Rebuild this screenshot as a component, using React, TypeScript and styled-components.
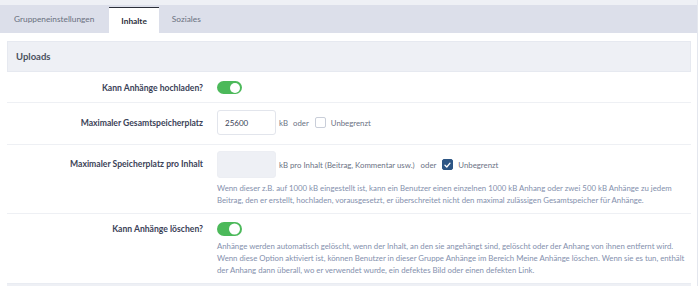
import React from "react";
import styled, { createGlobalStyle } from "styled-components";

const Global = createGlobalStyle`
  html, body { margin: 0; padding: 0; background: #ffffff; }
  body { font-family: Lato, "Open Sans", sans-serif; }
  * { box-sizing: border-box; }
`;

const Page = styled.div`
  width: 698px;
  height: 286px;
  overflow: hidden;
  border-right: 1px solid #e4e7ee;
  background: #fff;
`;

const TopStrip = styled.div`
  height: 5px;
  background: #eef0f5;
`;

const TabBar = styled.div`
  height: 28px;
  background: #dcdfea;
  display: flex;
  align-items: flex-end;
`;

const Tab = styled.div<{ $active?: boolean; $first?: boolean }>`
  height: ${(p) => (p.$active ? "26px" : "28px")};
  padding: ${(p) => (p.$first ? "0 15px 0 14px" : p.$active ? "0 12px" : "0 13px")};
  display: flex;
  align-items: center;
  font-size: 8.3px;
  font-weight: ${(p) => (p.$active ? 700 : 400)};
  color: ${(p) => (p.$active ? "#2b2f3a" : "#6a7080")};
  background: ${(p) => (p.$active ? "#ffffff" : "transparent")};
  border-top: ${(p) => (p.$active ? "1.5px solid #2b2f3a" : "none")};
`;

const Content = styled.div`
  padding: 8px 6px 0 7px;
`;

const SectionHeader = styled.div`
  height: 31px;
  background: #eef0f5;
  border: 1px solid #e6e9f0;
  display: flex;
  align-items: center;
  padding-left: 8px;
  font-size: 9.5px;
  font-weight: 700;
  color: #4a505e;
`;

const Row = styled.div<{ $pt: number; $pb: number; $last?: boolean }>`
  display: grid;
  grid-template-columns: 196px 1fr;
  column-gap: 14px;
  padding: ${(p) => p.$pt}px 0 ${(p) => p.$pb}px;
  border-bottom: 1px solid ${(p) => (p.$last ? "#e9ecf2" : "#eef0f4")};
`;

const Label = styled.div<{ $h: number }>`
  height: ${(p) => p.$h}px;
  display: flex;
  align-items: center;
  justify-content: flex-end;
  font-size: 8.6px;
  font-weight: 700;
  color: #3b4257;
  white-space: nowrap;
`;

const Control = styled.div`
  display: flex;
  flex-direction: column;
`;

const Line = styled.div`
  display: flex;
  align-items: center;
  white-space: nowrap;
`;

const Toggle = styled.div<{ $h: number }>`
  width: 25px;
  height: ${(p) => p.$h}px;
  border-radius: 8px;
  background: #4cb95a;
  position: relative;
  &::after {
    content: "";
    position: absolute;
    right: 2px;
    top: 50%;
    transform: translateY(-50%);
    width: ${(p) => p.$h - 3}px;
    height: ${(p) => p.$h - 3}px;
    border-radius: 50%;
    background: #fff;
  }
`;

const Input = styled.div<{ $disabled?: boolean; $h: number }>`
  width: 59px;
  height: ${(p) => p.$h}px;
  border: 1px solid ${(p) => (p.$disabled ? "#eceef3" : "#e2e5ec")};
  border-radius: 3px;
  background: ${(p) => (p.$disabled ? "#eef0f5" : "#ffffff")};
  display: flex;
  align-items: center;
  padding-left: 7px;
  font-size: 8px;
  color: #3b4257;
`;

const Unit = styled.span<{ $ml: number }>`
  margin-left: ${(p) => p.$ml}px;
  font-size: 7.8px;
  color: #6b7284;
`;

const Check = styled.span<{ $checked?: boolean }>`
  width: 11px;
  height: 11px;
  margin-left: 6px;
  border-radius: 2px;
  border: 1px solid ${(p) => (p.$checked ? "#2d5584" : "#c9ced9")};
  background: ${(p) => (p.$checked ? "#2d5584" : "#fff")};
  display: inline-flex;
  align-items: center;
  justify-content: center;
`;

const Help = styled.p`
  margin: 4px 0 0;
  font-size: 7.8px;
  line-height: 12px;
  color: #8490ad;
  max-width: 468px;
`;

const BottomBar = styled.div`
  height: 10px;
  background: #eef0f5;
`;

export default function App() {
  return (
    <>
      <Global />
      <Page>
        <TopStrip />
        <TabBar>
          <Tab $first>Gruppeneinstellungen</Tab>
          <Tab $active>Inhalte</Tab>
          <Tab>Soziales</Tab>
        </TabBar>
        <Content>
          <SectionHeader>Uploads</SectionHeader>
          <Row $pt={9} $pb={8}>
            <Label $h={13}>Kann Anhänge hochladen?</Label>
            <Control>
              <Toggle $h={13} />
            </Control>
          </Row>
          <Row $pt={7} $pb={9}>
            <Label $h={25}>Maximaler Gesamtspeicherplatz</Label>
            <Control>
              <Line>
                <Input $h={25}>25600</Input>
                <Unit $ml={3}>kB</Unit>
                <Unit $ml={5}>oder</Unit>
                <Check />
                <Unit $ml={5}>Unbegrenzt</Unit>
              </Line>
            </Control>
          </Row>
          <Row $pt={6} $pb={7}>
            <Label $h={25}>Maximaler Speicherplatz pro Inhalt</Label>
            <Control>
              <Line>
                <Input $h={27} $disabled />
                <Unit $ml={3}>kB pro Inhalt (Beitrag, Kommentar usw.)</Unit>
                <Unit $ml={6}>oder</Unit>
                <Check $checked>
                  <svg width="7" height="6" viewBox="0 0 7 6">
                    <path d="M1 3.2 L2.8 5 L6 1.2" fill="none" stroke="#fff" strokeWidth="1.3" strokeLinecap="round" strokeLinejoin="round" />
                  </svg>
                </Check>
                <Unit $ml={5}>Unbegrenzt</Unit>
              </Line>
              <Help>
                Wenn dieser z.B. auf 1000 kB eingestellt ist, kann ein Benutzer einen einzelnen 1000 kB Anhang oder zwei 500 kB Anhänge zu jedem Beitrag, den er erstellt, hochladen, vorausgesetzt, er überschreitet nicht den maximal zulässigen Gesamtspeicher für Anhänge.
              </Help>
            </Control>
          </Row>
          <Row $pt={8} $pb={7} $last>
            <Label $h={14}>Kann Anhänge löschen?</Label>
            <Control>
              <Toggle $h={14} />
              <Help>
                Anhänge werden automatisch gelöscht, wenn der Inhalt, an den sie angehängt sind, gelöscht oder der Anhang von ihnen entfernt wird. Wenn diese Option aktiviert ist, können Benutzer in dieser Gruppe Anhänge im Bereich Meine Anhänge löschen. Wenn sie es tun, enthält der Anhang dann überall, wo er verwendet wurde, ein defektes Bild oder einen defekten Link.
              </Help>
            </Control>
          </Row>
          <BottomBar />
        </Content>
      </Page>
    </>
  );
}
